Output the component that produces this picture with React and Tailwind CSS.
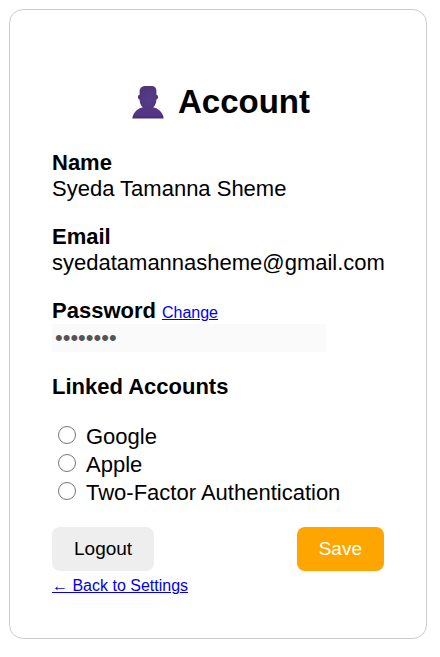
const radioClass =
  "mb-1 ml-1.5 mr-2.5 h-[18px] w-[18px] shrink-0 appearance-none rounded-full border border-[#767676] bg-white checked:border-[5px] checked:border-[#0075ff]";

const linkedAccounts = [
  { id: "google", label: "Google" },
  { id: "apple", label: "Apple" },
  { id: "two-factor", label: "Two-Factor Authentication" },
];

function PersonIcon() {
  return (
    <svg viewBox="0 0 32 34" className="h-[34px] w-8 shrink-0" aria-hidden="true">
      <defs>
        <radialGradient id="head" cx="0.55" cy="0.6" r="0.7">
          <stop offset="0" stopColor="#573b8c" />
          <stop offset="1" stopColor="#4d3672" />
        </radialGradient>
        <linearGradient id="shoulders" x1="0" y1="0" x2="0" y2="1">
          <stop offset="0" stopColor="#553785" />
          <stop offset="0.75" stopColor="#533389" />
          <stop offset="1" stopColor="#472b68" />
        </linearGradient>
      </defs>
      <path
        d="M0.3 33.4C1 26.6 7 21.4 16 21.4S31 26.6 31.7 33.4Z"
        fill="url(#shoulders)"
      />
      <path
        d="M7.6 9.8V6.3C7.6 3.2 10 1 13.2 1H19.5C22.6 1 24.4 2.8 24.4 5.6V9.8C25.5 9.8 26.1 10.8 26.1 12.1S25.4 14.5 24.4 14.5C24.4 18 23.2 20.6 21 22.4C19.6 23.6 12.4 23.6 11 22.4C8.8 20.6 7.6 18 7.6 14.5C6.6 14.5 5.9 13.4 5.9 12.1S6.5 9.8 7.6 9.8Z"
        fill="url(#head)"
      />
    </svg>
  );
}

export default function App() {
  return (
    <main className="bg-white p-[9px] pr-[13px] font-['Liberation_Sans',Arial,sans-serif] text-[22px] leading-[26px] text-black">
      <form
        className="rounded-[14px] border border-[#cccccc] px-[42px] pt-[73px] pb-[39px]"
        onSubmit={(event) => event.preventDefault()}
      >
        <h1 className="flex items-center justify-center gap-[14px] pl-1.5 text-[33px] leading-[38px] font-bold">
          <PersonIcon />
          Account
        </h1>

        <div className="mt-[29px]">
          <h2 className="font-bold">Name</h2>
          <p>Syeda Tamanna Sheme</p>
        </div>

        <div className="mt-[22px]">
          <h2 className="font-bold">Email</h2>
          <p>syedatamannasheme@gmail.com</p>
        </div>

        <div className="mt-[22px]">
          <div className="flex items-baseline gap-1.5">
            <label htmlFor="password" className="font-bold">
              Password
            </label>
            <a href="#change" className="text-[16px] leading-[18px] text-[#0000ee] underline">
              Change
            </a>
          </div>
          <input
            id="password"
            type="password"
            defaultValue="password"
            disabled
            className="block h-7 w-[274px] max-w-full bg-[#fafafa] px-[3px] text-[22px] text-[#545454]"
          />
        </div>

        <fieldset className="mt-[22px]">
          <legend className="font-bold">Linked Accounts</legend>
          <div className="mt-[23px]">
            {linkedAccounts.map(({ id, label }) => (
              <div key={id} className="flex h-7 items-center">
                <input type="radio" id={id} name={id} className={radioClass} />
                <label htmlFor={id}>{label}</label>
              </div>
            ))}
          </div>
        </fieldset>

        <div className="mt-5 flex justify-between text-[19px] leading-[22px]">
          <button type="button" className="rounded-lg bg-[#eeeeee] px-[22px] py-[11px]">
            Logout
          </button>
          <button
            type="submit"
            className="rounded-lg bg-[#ffa500] px-[22px] py-[11px] text-white"
          >
            Save
          </button>
        </div>
        <a href="#settings" className="text-[16px] text-[#0000ee] underline">
          ← Back to Settings
        </a>
      </form>
    </main>
  );
}
